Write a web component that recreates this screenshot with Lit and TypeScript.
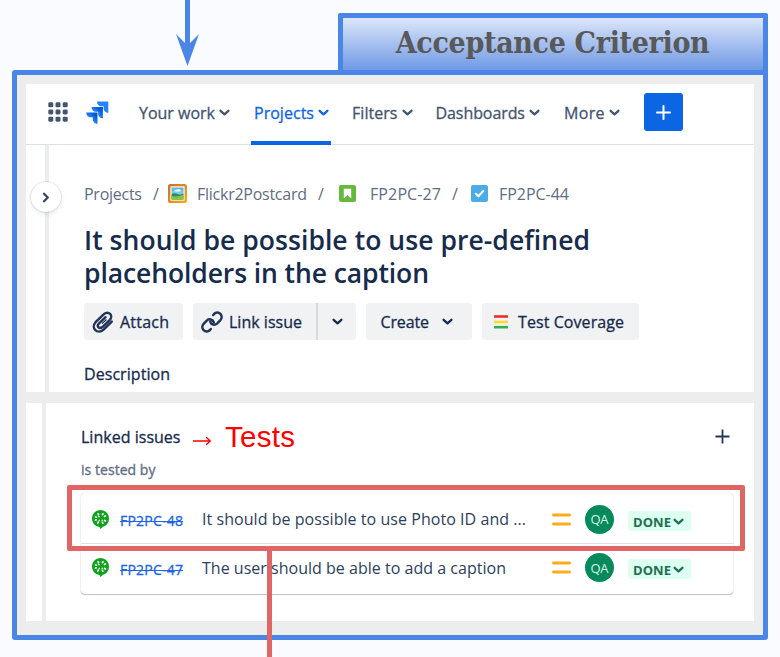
import { LitElement, html, css, svg } from "lit";
import { customElement, property } from "lit/decorators.js";

/** A single-line label whose tracking is adjusted to fill a given width. */
@customElement("fit-label")
class FitLabel extends LitElement {
  @property({ type: Number }) w = 0;
  static styles = css`
    :host { display: inline-block; white-space: pre; flex: none; }
    span { display: inline-block; }
  `;
  firstUpdated() {
    const span = this.renderRoot.querySelector("span") as HTMLElement;
    const natural = span.getBoundingClientRect().width;
    const count = Math.max(1, (this.textContent || "").length - 1);
    span.style.letterSpacing = `${(this.w - natural) / count}px`;
    this.style.width = `${this.w}px`;
  }
  render() {
    return html`<span><slot></slot></span>`;
  }
}

const chevron = html`<svg class="chev" viewBox="0 0 11 8">
  <path d="M1.6 1.8 L5.5 5.3 L9.4 1.8" fill="none" stroke="currentColor" stroke-width="2.3" stroke-linecap="round" stroke-linejoin="round" />
</svg>`;

const label = (text: string, w: number) => html`<fit-label .w=${w}>${text}</fit-label>`;

const appGrid = html`<svg class="grid-icon" viewBox="0 0 20 20">
  ${[0, 7.2, 14.4].map((y) => [0, 7.2, 14.4].map((x) => svg`<rect x=${x + 0.3} y=${y + 0.3} width="5" height="5" rx="1.4" fill="#44546f"/>`))}
</svg>`;

const jiraLogo = html`<svg class="jira" viewBox="0 0 23 23">
  <defs>
    <linearGradient id="ja" x1="0.95" y1="0.05" x2="0.4" y2="0.6"><stop offset="0.15" stop-color="#0052cc" /><stop offset="1" stop-color="#2684ff" /></linearGradient>
  </defs>
  <path d="M11 0.5 H22.3 V11.8 C19.6 11.8 17.6 9.6 17.6 7.2 V5.3 H15.6 C13 5.3 11 3.2 11 0.5Z" fill="#2684ff" />
  <path d="M5.6 6 H16.9 V17.3 C14.2 17.3 12.2 15.2 12.2 12.7 V10.8 H10.2 C7.6 10.8 5.6 8.7 5.6 6Z" fill="url(#ja)" />
  <path d="M0.2 11.5 H11.5 V22.8 C8.8 22.8 6.8 20.7 6.8 18.2 V16.3 H4.8 C2.2 16.3 0.2 14.2 0.2 11.5Z" fill="url(#ja)" />
</svg>`;

const pictureIcon = html`<svg class="picture" viewBox="0 0 19 19">
  <defs>
    <linearGradient id="fr" x1="0" y1="0" x2="1" y2="1"><stop offset="0" stop-color="#cb6a2f" /><stop offset="1" stop-color="#f8ae17" /></linearGradient>
    <linearGradient id="sk" x1="0" y1="0" x2="0" y2="1"><stop offset="0" stop-color="#49b3ec" /><stop offset="1" stop-color="#b5e2f7" /></linearGradient>
  </defs>
  <rect width="19" height="19" rx="2.6" fill="url(#fr)" />
  <rect x="2.3" y="2.3" width="14.4" height="14.4" rx="0.8" fill="#fdf3dd" />
  <rect x="3.6" y="3.6" width="11.8" height="11.8" fill="url(#sk)" />
  <path d="M3.6 10 Q6.5 8.4 9 9.8 T15.4 9.5 V15.4 H3.6Z" fill="#2f8a5f" />
  <path d="M3.6 12 Q9 13.3 15.4 10.8 V15.4 H3.6Z" fill="#86c440" />
  <path d="M6.4 7.6 a1.6 1.6 0 0 1 2.7 -1.5 a1.8 1.8 0 0 1 3.4 1.5Z" fill="#fff" />
</svg>`;

const storyIcon = html`<svg class="type" viewBox="0 0 17 17">
  <rect width="17" height="17" rx="2" fill="#63ba3c" />
  <path d="M4.8 3.8 H12.2 V13.4 L8.5 10 L4.8 13.4Z" fill="#fff" />
</svg>`;

const taskIcon = html`<svg class="type task" viewBox="0 0 17 17">
  <rect width="17" height="17" rx="2" fill="#4bade8" />
  <path d="M4.9 8.8 L7.4 11.3 L12.3 5.9" fill="none" stroke="#fff" stroke-width="2.1" stroke-linecap="round" stroke-linejoin="round" />
</svg>`;

const clipIcon = html`<svg class="clip" viewBox="0 0 22 22">
  <path d="M19.8 10.6 L11.6 18.6 C5.4 24 -1.6 17 3.6 11.2 L11.6 3.4 C16.6 -1 22 4.6 17.6 9.2 L10.4 16 C7.4 18.6 4.2 15.4 6.8 12.6 L13.6 6.2" fill="none" stroke="#22345a" stroke-width="2.4" stroke-linecap="round" />
  <path d="M10.3 12.4 L14.2 8.8" fill="none" stroke="#22345a" stroke-width="1.2" stroke-linecap="round" />
</svg>`;

const linkIcon = html`<svg class="link" viewBox="0 0 22 22" fill="none" stroke="#22345a" stroke-width="2.5" stroke-linecap="round">
  <path d="M12.8 11.4 C11.8 8 8 7.6 6 9.4 L2.8 12.6 C0.9 14.6 0.9 17.3 2.6 19.1 C4.4 20.9 7.2 20.8 9 19 L9.8 18" />
  <path d="M9.2 10.6 C10.2 14 14 14.4 16 12.6 L19.2 9.4 C21.1 7.4 21.1 4.7 19.4 2.9 C17.6 1.1 14.8 1.2 13 3 L12.2 4" />
</svg>`;

const cucumber = html`<svg class="cuke" viewBox="0 0 17 19">
  <path d="M8.5 0 C13.3 0 17 3.8 17 8.6 C17 12.8 14.2 16 10.8 16.9 L8.4 19 L7.4 17 C3.2 16.5 0 13 0 8.6 C0 3.8 3.7 0 8.5 0Z" fill="#0fa31c" />
  <g fill="#fff">
    ${[[6.3, 4.2, -25], [10.7, 4.2, 25], [4.1, 7, -65], [12.9, 6.2, 60], [3.9, 9.9, 75], [13, 10.6, -65], [6, 12.6, 30], [10.6, 12.8, -25], [7, 6.5, -30], [7.2, 10.6, 30], [10.2, 10.4, -30]].map(
      ([x, y, a], i) => svg`<ellipse cx=${x} cy=${y} rx=${i < 8 ? 0.95 : 0.7} ry=${i < 8 ? 1.35 : 0.9} transform="rotate(${a} ${x} ${y})"/>`
    )}
  </g>
</svg>`;

const NAV = [
  { text: "Your work", w: 76, cls: "n1" },
  { text: "Projects", w: 60, cls: "n2" },
  { text: "Filters", w: 45.5, cls: "n3" },
  { text: "Dashboards", w: 89.5, cls: "n4" },
  { text: "More", w: 40.5, cls: "n5" },
];

const ISSUES = [
  { key: "FP2PC-48", title: "It should be possible to use Photo ID and ...", w: 324 },
  { key: "FP2PC-47", title: "The user should be able to add a caption", w: 304 },
];

@customElement("app-root")
class AppRoot extends LitElement {
  static styles = css`
    :host {
      display: block; position: relative; box-sizing: border-box; width: 780px; height: 657px; overflow: hidden;
      background: #fafbfe; color: #172b4d; font-family: "Open Sans", "Noto Sans", sans-serif; font-size: 16px;
      padding: 70px 0 0 12px;
    }
    * { box-sizing: border-box; }
    svg { display: block; flex: none; overflow: visible; }
    .arrow { position: absolute; left: 175px; top: 0; width: 25px; height: 67px; }
    .tag {
      position: absolute; left: 338px; top: 13px; width: 429.5px; height: 62px; border: 5px solid #4a86e8; border-radius: 2px;
      background: linear-gradient(#dbe6fa, #7099e4); display: flex; justify-content: center; padding-top: 5px;
      font: bold 30px/40px "DejaVu Serif Condensed", "DejaVu Serif", serif; font-stretch: condensed; color: #595959;
    }
    .frame { width: 755.5px; height: 570px; border: 5px solid #4a86e8; border-radius: 3px; background: #ededed; padding: 9px 8.5px 0 9px; }
    .panel { background: #fff; overflow: hidden; }
    .top { height: 308px; }
    .bottom { height: 218px; margin-top: 11px; display: flex; }
    nav { height: 61px; border-bottom: 1px solid #dcdfe4; display: flex; align-items: center; padding: 0 0 4px 22px; color: #44546f; -webkit-text-stroke: 0.3px; }
    .grid-icon { width: 20px; height: 20px; }
    .jira { width: 23px; height: 23px; margin-left: 18px; }
    .chev { width: 11px; height: 8px; }
    .item { display: flex; align-items: center; gap: 4px; height: 61px; padding-top: 1px; flex: none; }
    .n1 { margin-left: 30px; }
    .n2 { margin-left: 21px; padding: 0 2px 3px 3px; color: #0c66e4; align-self: flex-start; box-shadow: inset 0 -4px #0c66e4; }
    .n3 { margin-left: 21px; }
    .n4 { margin-left: 23px; }
    .n5 { margin-left: 24px; }
    .add { width: 39px; height: 38px; border-radius: 3px; background: #0c66e4; margin-left: 24px; display: grid; place-items: center; }
    .body { display: flex; height: 247px; }
    .rail { width: 19px; flex: none; position: relative; }
    .line { width: 4px; background: #ebedf0; flex: none; }
    .toggle {
      position: absolute; left: 5px; top: 37px; width: 30px; height: 30px; border-radius: 50%; background: #fff; z-index: 1;
      box-shadow: 0 0 0 1px #091e4214, 0 2px 4px 1px #091e4214; display: grid; place-items: center;
    }
    .content { padding: 36px 0 0 35px; }
    .crumbs { display: flex; align-items: center; height: 25px; color: #5e6c84; }
    .crumbs .sep { margin: 0 8px 0 11px; width: 7px; }
    .crumbs .before-story { margin-right: 14px; }
    .crumbs .before-task { margin-right: 12px; }
    .picture { width: 19px; height: 19px; margin-right: 10px; }
    .type { width: 17px; height: 17px; margin-right: 14px; }
    .type.task { margin-right: 11px; }
    h1 { margin: 18px 0 0; font-size: 26.5px; line-height: 33px; font-weight: 600; height: 66px; }
    h1 fit-label { display: block; }
    .buttons { display: flex; gap: 10px; margin-top: 13px; -webkit-text-stroke: 0.3px; }
    .btn { height: 37px; border-radius: 3px; background: #f1f2f4; display: flex; align-items: center; flex: none; }
    .attach { width: 99px; padding-left: 8px; gap: 6px; }
    .linkb { width: 163px; padding-left: 8px; }
    .linkb fit-label { margin-left: 6px; }
    .split { width: 2px; height: 37px; background: #d5d9e0; margin: 0 14px 0 13.5px; }
    .create { width: 106px; padding-left: 14.5px; gap: 13px; }
    .cover { width: 157px; padding-left: 12px; gap: 10px; }
    .clip, .link { width: 22px; height: 22px; }
    h2 { margin: 23px 0 0; font-size: 16px; font-weight: 400; line-height: 22px; -webkit-text-stroke: 0.3px; }
    .bottom .line { margin-left: 16px; }
    .linked { padding: 19px 0 0 35px; width: 700px; }
    .heading { display: flex; align-items: center; height: 29px; -webkit-text-stroke: 0.3px; }
    .sym { color: #f00; margin-left: 11px; width: 21px; height: 12px; margin-top: 8px; }
    .tests { color: #f00; font: 29.5px/28px "Liberation Sans", Arial, sans-serif; margin-left: 12.5px; -webkit-text-stroke: 0; }
    .plus { margin-left: auto; margin-right: 16.5px; }
    .sub { color: #626f86; font-size: 14px; line-height: 20px; margin-top: 9px; height: 20px; -webkit-text-stroke: 0.35px; }
    .card { width: 652px; height: 101px; border-radius: 4px; box-shadow: 0 1px 1px #091e4240, 0 0 1px #091e424f; margin-top: 13px; background: #fff; }
    .row { height: 51px; display: flex; align-items: center; padding-left: 11px; padding-top: 2px; }
    .row:first-child { border-bottom: 1px solid #dfe1e6; }
    .row:last-child { padding-top: 0; height: 47px; }
    .cuke { width: 17px; height: 19px; }
    .key { color: #1d63e6; font-size: 14px; margin: 3px 19px 0 11px; position: relative; -webkit-text-stroke: 0.3px; }
    .key::after { content: ""; position: absolute; left: 0; right: 0; top: 10px; height: 1px; background: #1d63e6; }
    .title { width: 350px; color: #2c3e5d; flex: none; }
    .prio { width: 19px; height: 13px; }
    .avatar { width: 29px; height: 29px; border-radius: 50%; background: #078a5b; color: #d6f3e6; display: grid; place-items: center; font-size: 13px; margin-left: 14px; }
    .pill { width: 63px; height: 20px; border-radius: 3px; background: #dcfff1; color: #216e4e; margin: 3px 0 0 14px; display: flex; align-items: center; gap: 2px; padding: 2px 0 0 5px; font-size: 13px; font-weight: 700; line-height: 18px; }
    .focus { position: absolute; left: 67px; top: 485px; width: 678px; height: 66px; border: 5px solid #e06666; border-radius: 2px; }
    .stem { position: absolute; left: 267px; top: 551px; width: 5px; height: 106px; background: #e06666; }
  `;

  row(i: { key: string; title: string; w: number }) {
    return html`<div class="row">
      ${cucumber}
      <div class="key">${label(i.key, 63)}</div>
      <div class="title">${label(i.title, i.w)}</div>
      <svg class="prio" viewBox="0 0 19 13"><path d="M1.4 2 H17.6 M1.4 11 H17.6" stroke="#ffab1a" stroke-width="2.8" stroke-linecap="round" /></svg>
      <div class="avatar">${label("QA", 18)}</div>
      <div class="pill">${label("DONE", 38)}${chevron}</div>
    </div>`;
  }

  render() {
    return html`
      <div class="frame">
        <section class="panel top">
          <nav>
            ${appGrid}${jiraLogo}
            ${NAV.map((n) => html`<div class="item ${n.cls}">${label(n.text, n.w)}${chevron}</div>`)}
            <div class="add"><svg width="15" height="15" viewBox="0 0 15 15"><path d="M7.5 1 V14 M1 7.5 H14" stroke="#fff" stroke-width="2" stroke-linecap="round" /></svg></div>
          </nav>
          <div class="body">
            <div class="rail"><div class="toggle"><svg width="8" height="11" viewBox="0 0 8 11"><path d="M2 1.8 L5.8 5.5 L2 9.2" fill="none" stroke="#344563" stroke-width="2.3" stroke-linecap="round" stroke-linejoin="round" /></svg></div></div>
            <div class="line"></div>
            <div class="content">
              <div class="crumbs">
                ${label("Projects", 58)}<span class="sep">/</span>${pictureIcon}${label("Flickr2Postcard", 110)}
                <span class="sep before-story">/</span>${storyIcon}${label("FP2PC-27", 71)}
                <span class="sep before-task">/</span>${taskIcon}${label("FP2PC-44", 70)}
              </div>
              <h1>${label("It should be possible to use pre-defined", 506)}${label("placeholders in the caption", 345)}</h1>
              <div class="buttons">
                <div class="btn attach">${clipIcon}${label("Attach", 49)}</div>
                <div class="btn linkb">${linkIcon}${label("Link issue", 73)}<span class="split"></span>${chevron}</div>
                <div class="btn create">${label("Create", 48.5)}${chevron}</div>
                <div class="btn cover">
                  <svg width="14" height="14" viewBox="0 0 14 14"><path d="M0 1.5 H14" stroke="#ef2b2d" stroke-width="2.6" /><path d="M0 7 H14" stroke="#fbd92d" stroke-width="2.6" /><path d="M0 12.2 H14" stroke="#32b14a" stroke-width="2.6" /></svg>
                  ${label("Test Coverage", 106)}
                </div>
              </div>
              <h2>${label("Description", 86)}</h2>
            </div>
          </div>
        </section>
        <section class="panel bottom">
          <div class="line"></div>
          <div class="linked">
            <div class="heading">
              ${label("Linked issues", 99.5)}
              <svg class="sym" viewBox="0 0 21 12"><path d="M1 6 H18 M14.2 2.2 L18.2 6 L14.2 9.8" fill="none" stroke="currentColor" stroke-width="1.4" /></svg>
              <span class="tests">${label("Tests", 70)}</span>
              <svg class="plus" width="15" height="15" viewBox="0 0 15 15"><path d="M7.5 0.5 V14.5 M0.5 7.5 H14.5" stroke="#22345a" stroke-width="1.8" /></svg>
            </div>
            <div class="sub">${label("is tested by", 74.5)}</div>
            <div class="card">${ISSUES.map((i) => this.row(i))}</div>
          </div>
        </section>
      </div>
      <svg class="arrow" viewBox="0 0 25 67"><path d="M10 0 H15 V43 L24 34 L12.5 66 L1 34 L10 43Z" fill="#4a86e8" /></svg>
      <div class="tag">${label("Acceptance Criterion", 314)}</div>
      <div class="focus"></div>
      <div class="stem"></div>
    `;
  }
}
